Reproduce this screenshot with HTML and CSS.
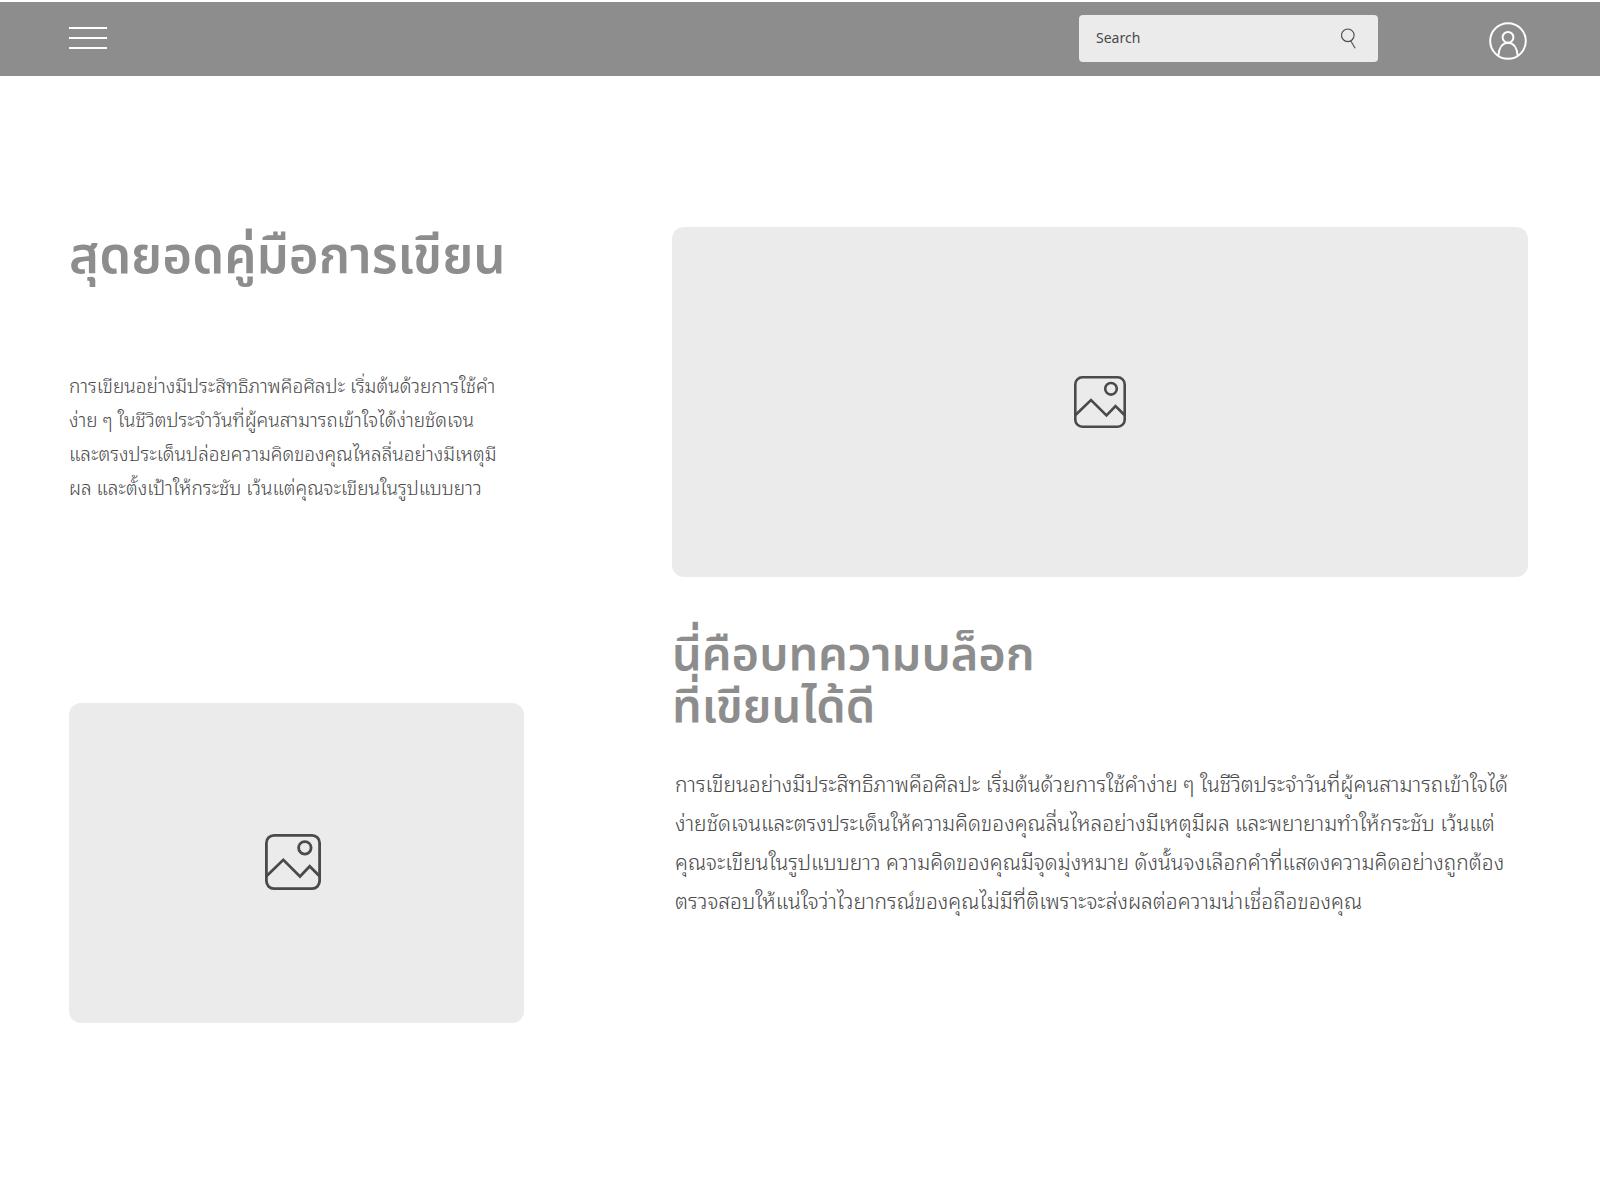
FILE: index.html
```html
<!DOCTYPE html>
<html lang="th">
<head>
    <meta charset="UTF-8">
    <meta name="viewport" content="width=device-width, initial-scale=1.0">
    <title>สุดยอดคู่มือการเขียน</title>
    <link rel="stylesheet" href="styles.css">
</head>
<body>
    <header class="topbar">
        <button class="menu-btn" type="button" aria-label="Menu">
            <span></span>
            <span></span>
            <span></span>
        </button>

        <form class="search" role="search">
            <input type="search" placeholder="Search" aria-label="Search">
            <button type="submit" aria-label="Submit search">
                <svg width="16" height="22" viewBox="0 0 16 22" fill="none" stroke="#4a4a4a" stroke-width="1.1">
                    <circle cx="6.8" cy="8.3" r="6.3"/>
                    <path d="M9.8 14L14.2 21.3"/>
                </svg>
            </button>
        </form>

        <a class="profile" href="#" aria-label="Profile">
            <svg width="38" height="38" viewBox="0 0 38 38" fill="none" stroke="#fff" stroke-width="2">
                <circle cx="19" cy="19" r="17.8"/>
                <circle cx="19" cy="15.3" r="5.4"/>
                <path d="M9.3 33.5C10 26 13.5 20.8 19 20.8S28 26 28.7 33.5"/>
            </svg>
        </a>
    </header>

    <main class="page">
        <section class="col">
            <h1>สุดยอดคู่มือการเขียน</h1>
            <p class="intro">
                การเขียนอย่างมีประสิทธิภาพคือศิลปะ เริ่มต้นด้วยการใช้คำ<br>
                ง่าย ๆ ในชีวิตประจำวันที่ผู้คนสามารถเข้าใจได้ง่ายชัดเจน<br>
                และตรงประเด็นปล่อยความคิดของคุณไหลลื่นอย่างมีเหตุมี<br>
                ผล และตั้งเป้าให้กระชับ เว้นแต่คุณจะเขียนในรูปแบบยาว
            </p>
            <div class="picture picture-small">
                <svg width="56" height="56" viewBox="0 0 52 52" fill="none" stroke="#4a4a4a" stroke-width="2.6">
                    <rect x="1.3" y="1.3" width="49.4" height="49.4" rx="7"/>
                    <circle cx="37" cy="12.8" r="5.8"/>
                    <path d="M1.5 39L17 24L32.5 39.5L41.5 30L50.5 39"/>
                </svg>
            </div>
        </section>

        <section class="col">
            <div class="picture picture-large">
                <svg width="52" height="52" viewBox="0 0 52 52" fill="none" stroke="#4a4a4a" stroke-width="2.6">
                    <rect x="1.3" y="1.3" width="49.4" height="49.4" rx="7"/>
                    <circle cx="37" cy="12.8" r="5.8"/>
                    <path d="M1.5 39L17 24L32.5 39.5L41.5 30L50.5 39"/>
                </svg>
            </div>
            <h2>นี่คือบทความบล็อก<br>ที่เขียนได้ดี</h2>
            <p class="article">
                การเขียนอย่างมีประสิทธิภาพคือศิลปะ เริ่มต้นด้วยการใช้คำง่าย ๆ ในชีวิตประจำวันที่ผู้คนสามารถเข้าใจได้<br>
                ง่ายชัดเจนและตรงประเด็นให้ความคิดของคุณลื่นไหลอย่างมีเหตุมีผล และพยายามทำให้กระชับ เว้นแต่<br>
                คุณจะเขียนในรูปแบบยาว ความคิดของคุณมีจุดมุ่งหมาย ดังนั้นจงเลือกคำที่แสดงความคิดอย่างถูกต้อง<br>
                ตรวจสอบให้แน่ใจว่าไวยากรณ์ของคุณไม่มีที่ติเพราะจะส่งผลต่อความน่าเชื่อถือของคุณ
            </p>
        </section>
    </main>
</body>
</html>
```
FILE: styles.css
```css
* {
    box-sizing: border-box;
}

body {
    margin: 0;
    padding-top: 2px;
    background: #fff;
    color: #4a4a4a;
    font-family: 'Noto Sans', 'Noto Sans Thai', sans-serif;
}

.topbar {
    display: flex;
    align-items: center;
    height: 74px;
    padding: 0 73px 2px 69px;
    background: #8d8d8d;
}

.menu-btn {
    display: flex;
    flex-direction: column;
    gap: 8px;
    width: 38px;
    padding: 0;
    border: none;
    background: none;
    cursor: pointer;
}

.menu-btn span {
    height: 2px;
    background: #fff;
}

.search {
    display: flex;
    align-items: center;
    width: 299px;
    height: 47px;
    margin-left: auto;
    padding: 0 21px 1px 17px;
    border-radius: 4px;
    background: #ebebeb;
}

.search input {
    flex: 1;
    min-width: 0;
    padding: 0;
    border: none;
    outline: none;
    background: none;
    color: #4a4a4a;
    font-family: inherit;
    font-size: 14px;
}

.search input::placeholder {
    color: #4a4a4a;
    opacity: 1;
}

.search button {
    display: flex;
    padding: 0;
    border: none;
    background: none;
    cursor: pointer;
}

.profile {
    display: flex;
    margin-left: 111px;
    padding-top: 6px;
}

.page {
    display: grid;
    grid-template-columns: 455fr 856fr;
    column-gap: 148px;
    padding: 151px 72px 100px 69px;
}

.col {
    min-width: 0;
}

h1,
h2 {
    margin: 0;
    color: #8d8d8d;
    font-weight: 600;
    line-height: 52px;
    white-space: nowrap;
}

h1 {
    font-size: 51px;
}

h2 {
    margin-top: 49px;
    font-size: 47px;
}

p {
    margin: 0;
    font-family: 'Noto Sans Thai Looped', 'Noto Looped Thai', 'Loma', 'Garuda', 'Umpush', 'Noto Sans Thai', sans-serif;
    font-weight: 300;
    white-space: nowrap;
}

.intro {
    margin-top: 89px;
    font-size: 19px;
    line-height: 34px;
}

.article {
    margin-top: 33px;
    padding-left: 3px;
    font-size: 21px;
    line-height: 39px;
}

.picture {
    display: flex;
    align-items: center;
    justify-content: center;
    border-radius: 12px;
    background: #ebebeb;
}

.picture-small {
    height: 320px;
    margin-top: 199px;
    padding: 0 8px 2px 0;
}

.picture-large {
    height: 350px;
}
```
